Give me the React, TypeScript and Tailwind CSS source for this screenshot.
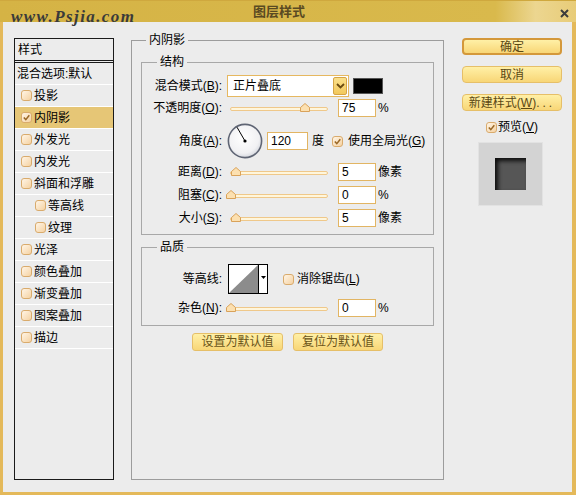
import React from "react";

const U = ({ c }: { c: string }) => <span className="underline underline-offset-[1px]">{c}</span>;

function Check({ checked }: { checked?: boolean }) {
  return (
    <span className="inline-flex w-[11px] h-[11px] shrink-0 items-center justify-center rounded-[3px] border border-[#d9ab6c] bg-linear-to-br from-[#fff5e6] to-[#f5d2a2]">
      {checked && (
        <svg width="7" height="7" viewBox="0 0 7 7">
          <path d="M0.8 3.4 L2.8 5.6 L6.3 1.2" fill="none" stroke="#9a6826" strokeWidth="1.5" />
        </svg>
      )}
    </span>
  );
}

function Slider({ at }: { at: number }) {
  const left = at - 227 - 5;
  return (
    <div className="relative w-[104px] h-[18px] shrink-0">
      <div className="absolute left-[3px] right-[3px] top-[8px] h-[4px] rounded-full border border-[#efc88a] bg-[#fff6dc]" />
      <svg className="absolute top-[4px]" style={{ left }} width="10" height="9" viewBox="0 0 10 9">
        <path d="M0.5 8.5 V4.5 L5 0.5 L9.5 4.5 V8.5 Z" fill="#fce0b0" stroke="#d9a25a" />
      </svg>
    </div>
  );
}

function Num({ v, wide }: { v: string; wide?: boolean }) {
  return (
    <div
      className={`${wide ? "w-[41px]" : "w-[38px]"} h-[18px] shrink-0 border border-[#e2b563] bg-white pl-[3px] flex items-center text-[12px]`}
    >
      {v}
    </div>
  );
}

function Label({ children }: { children: React.ReactNode }) {
  return <div className="w-[80px] shrink-0 text-right whitespace-nowrap">{children}</div>;
}

function Field({ title, className, children }: { title: string; className: string; children: React.ReactNode }) {
  return (
    <div className={`relative border border-[#a8a8a8] flex flex-col ${className}`}>
      <span className="absolute left-[15px] -top-[8px] px-[3px] bg-[#ececec] leading-[14px]">{title}</span>
      {children}
    </div>
  );
}

function Dial() {
  return (
    <svg width="36" height="36" viewBox="0 0 36 36" className="shrink-0">
      <defs>
        <radialGradient id="dialg" cx="45%" cy="40%" r="62%">
          <stop offset="0" stopColor="#ffffff" />
          <stop offset="0.75" stopColor="#f1f1f3" />
          <stop offset="1" stopColor="#d3d6dd" />
        </radialGradient>
      </defs>
      <circle cx="18" cy="18" r="16.6" fill="url(#dialg)" stroke="#5f6574" strokeWidth="1.6" />
      <line x1="18" y1="18" x2="10" y2="4.2" stroke="#000" strokeWidth="1" />
      <circle cx="18" cy="18" r="1.6" fill="#000" />
    </svg>
  );
}

function ContourBox() {
  return (
    <div className="w-[40px] h-[30px] shrink-0 border border-black bg-white flex">
      <svg width="29" height="28" viewBox="0 0 29 28">
        <polygon points="0,28 29,0 29,28" fill="#8c8c8c" />
      </svg>
      <div className="w-[9px] border-l border-black flex items-center justify-center pb-[3px]">
        <svg width="5" height="3" viewBox="0 0 5 3">
          <path d="M0 0 H5 L2.5 3 Z" fill="#000" />
        </svg>
      </div>
    </div>
  );
}

function SmallBtn({ children, w }: { children: React.ReactNode; w: string }) {
  return (
    <div
      className={`${w} h-[18px] rounded-[3px] border border-[#e6bf68] bg-linear-to-b from-[#fff0a6] to-[#f8d676] flex items-center justify-center text-[#6a5418]`}
    >
      {children}
    </div>
  );
}

function TitleBar() {
  return (
    <div className="relative h-[22px] shrink-0 flex justify-center pt-[4px] bg-[linear-gradient(to_right,#d5b345_0%,#d9b94c_86%,#ecd690_93%,#e8cc78_100%)] border-t border-[#cfa83e]">
      <span className="text-[13px] leading-[14px] font-bold text-[#5a4a22] pr-[18px]">图层样式</span>
      <svg className="absolute right-[7px] top-[8px]" width="9" height="9" viewBox="0 0 9 9">
        <path d="M1 1 L8 8 M8 1 L1 8" stroke="#3c3c3c" strokeWidth="2" />
      </svg>
    </div>
  );
}

const listItems: { t: string; checked?: boolean; sel?: boolean; indent?: boolean }[] = [
  { t: "投影" },
  { t: "内阴影", checked: true, sel: true },
  { t: "外发光" },
  { t: "内发光" },
  { t: "斜面和浮雕" },
  { t: "等高线", indent: true },
  { t: "纹理", indent: true },
  { t: "光泽" },
  { t: "颜色叠加" },
  { t: "渐变叠加" },
  { t: "图案叠加" },
  { t: "描边" },
];

function StyleList() {
  return (
    <div className="w-[100px] h-[442px] shrink-0 border border-[#1a1a1a] flex flex-col">
      <div className="h-[24px] border-b-[3px] border-double border-[#1a1a1a] pl-[3px] flex items-center">样式</div>
      <div className="h-[22px] border-b border-white pl-[2px] flex items-center whitespace-nowrap">混合选项:默认</div>
      {listItems.map((it) => (
        <div
          key={it.t}
          className={`h-[22px] border-b border-white flex items-center ${it.indent ? "pl-[20px]" : "pl-[6px]"} ${it.sel ? "bg-[#e6c676]" : ""}`}
        >
          <Check checked={it.checked} />
          <span className="ml-[2px]">{it.t}</span>
        </div>
      ))}
    </div>
  );
}

function MainPanel() {
  return (
    <div className="relative ml-[17px] mt-[2px] w-[313px] h-[440px] shrink-0 border border-[#9c9c9c] flex flex-col">
      <span className="absolute left-[14px] -top-[8px] px-[3px] bg-[#ececec] leading-[14px]">内阴影</span>

      <Field title="结构" className="mt-[21px] ml-[9px] mr-[9px] pt-[12px] pb-[7px]">
        <div className="h-[22px] flex items-center">
          <Label>
            混合模式(<U c="B" />):
          </Label>
          <div className="ml-[5px] w-[122px] h-[22px] border border-[#e6b860] bg-white flex items-center pl-[5px] pr-[1px]">
            <span>正片叠底</span>
            <div className="ml-auto w-[14px] h-[18px] rounded-[2px] border border-[#d4a448] bg-linear-to-b from-[#fbe08a] to-[#f2c85c] flex items-center justify-center">
              <svg width="9" height="6" viewBox="0 0 9 6">
                <path d="M1 1 L4.5 4.5 L8 1" fill="none" stroke="#6a4a10" strokeWidth="1.8" />
              </svg>
            </div>
          </div>
          <div className="ml-[4px] w-[30px] h-[16px] bg-black border border-[#555]" />
        </div>

        <div className="mt-[2px] h-[18px] flex items-center">
          <Label>
            不透明度(<U c="O" />):
          </Label>
          <div className="ml-[5px]">
            <Slider at={305} />
          </div>
          <div className="ml-[7px]">
            <Num v="75" />
          </div>
          <span className="ml-[2px]">%</span>
        </div>

        <div className="mt-[6px] h-[36px] flex items-center">
          <Label>
            角度(<U c="A" />):
          </Label>
          <div className="ml-[5px]">
            <Dial />
          </div>
          <div className="ml-[4px]">
            <Num v="120" wide />
          </div>
          <span className="ml-[4px]">度</span>
          <div className="ml-[8px] flex items-center">
            <Check checked />
          </div>
          <span className="ml-[5px] whitespace-nowrap">
            使用全局光(<U c="G" />)
          </span>
        </div>

        <div className="mt-[4px] h-[18px] flex items-center">
          <Label>
            距离(<U c="D" />):
          </Label>
          <div className="ml-[5px]">
            <Slider at={236} />
          </div>
          <div className="ml-[7px]">
            <Num v="5" />
          </div>
          <span className="ml-[2px]">像素</span>
        </div>

        <div className="mt-[5px] h-[18px] flex items-center">
          <Label>
            阻塞(<U c="C" />):
          </Label>
          <div className="ml-[5px]">
            <Slider at={231} />
          </div>
          <div className="ml-[7px]">
            <Num v="0" />
          </div>
          <span className="ml-[2px]">%</span>
        </div>

        <div className="mt-[5px] h-[18px] flex items-center">
          <Label>
            大小(<U c="S" />):
          </Label>
          <div className="ml-[5px]">
            <Slider at={236} />
          </div>
          <div className="ml-[7px]">
            <Num v="5" />
          </div>
          <span className="ml-[2px]">像素</span>
        </div>
      </Field>

      <Field title="品质" className="mt-[12px] ml-[9px] mr-[9px] pt-[16px] pb-[8px]">
        <div className="h-[30px] flex items-center">
          <Label>等高线:</Label>
          <div className="ml-[6px]">
            <ContourBox />
          </div>
          <div className="ml-[15px] flex items-center">
            <Check />
          </div>
          <span className="ml-[3px] whitespace-nowrap">
            消除锯齿(<U c="L" />)
          </span>
        </div>
        <div className="mt-[5px] h-[18px] flex items-center">
          <Label>
            杂色(<U c="N" />):
          </Label>
          <div className="ml-[5px]">
            <Slider at={231} />
          </div>
          <div className="ml-[7px]">
            <Num v="0" />
          </div>
          <span className="ml-[2px]">%</span>
        </div>
      </Field>

      <div className="mt-[7px] flex justify-center gap-[10px]">
        <SmallBtn w="w-[91px]">设置为默认值</SmallBtn>
        <SmallBtn w="w-[90px]">复位为默认值</SmallBtn>
      </div>
    </div>
  );
}

function RightColumn() {
  return (
    <div className="ml-[18px] w-[100px] shrink-0 flex flex-col">
      <div className="h-[17px] rounded-[4px] border-2 border-[#d4983a] bg-linear-to-b from-[#fff0a6] to-[#f8d676] flex items-center justify-center text-[#5a4814]">
        确定
      </div>
      <div className="mt-[11px] h-[17px] rounded-[4px] border border-[#e6bf68] bg-linear-to-b from-[#fff0a6] to-[#f8d676] flex items-center justify-center text-[#5a4814]">
        取消
      </div>
      <div className="mt-[11px] h-[17px] rounded-[4px] border border-[#e6bf68] bg-linear-to-b from-[#fff0a6] to-[#f8d676] flex items-center justify-center text-[#5a4814] whitespace-nowrap">
        新建样式(<U c="W" />)<span className="tracking-[3px]">...</span>
      </div>
      <div className="mt-[9px] h-[14px] flex items-center justify-center">
        <Check checked />
        <span className="ml-[1px]">
          预览(<U c="V" />)
        </span>
      </div>
      <div className="mt-[8px] ml-[16px] w-[65px] h-[64px] bg-[#d3d3d3] border border-[#e2e2e2] flex items-center justify-center">
        <div className="w-[31px] h-[32px] bg-[#565656] shadow-[inset_3px_3px_4px_rgba(0,0,0,0.85)]" />
      </div>
    </div>
  );
}

export default function App() {
  return (
    <div className="relative w-[576px] h-[495px] overflow-hidden bg-[#e4b95a] flex flex-col font-['Liberation_Sans','Noto_Sans_CJK_SC',sans-serif] text-[12px] leading-[14px] text-black">
      <TitleBar />
      <div className="flex-1 ml-[3px] mr-[4px] mb-[3px] bg-[#ececec] flex pl-[11px] pt-[16px]">
        <StyleList />
        <MainPanel />
        <RightColumn />
      </div>
      <span className="absolute left-[11px] top-[8px] font-['Liberation_Serif',serif] italic font-bold text-[17px] leading-[17px] tracking-[1.4px] text-[#3a3a3a]">
        www.Psjia.com
      </span>
    </div>
  );
}
